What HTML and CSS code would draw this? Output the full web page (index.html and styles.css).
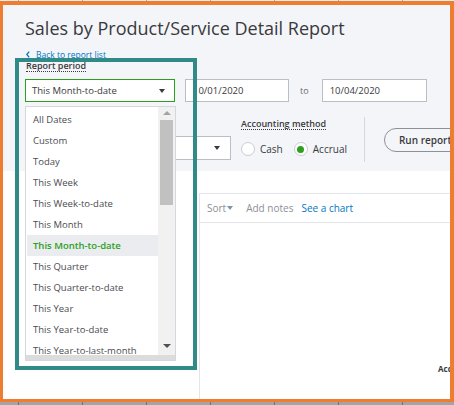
FILE: index.html
```html
<!DOCTYPE html>
<html lang="en">
  <head>
    <meta charset="UTF-8" />
    <meta name="viewport" content="width=device-width, initial-scale=1.0" />
    <title>Sales by Product/Service Detail Report</title>
    <link rel="stylesheet" href="styles.css">
  </head>
  <body>
    <div class="ruler ruler-top"></div>
    <div class="frame">
      <div class="report-head">
        <h1>Sales by Product/Service Detail Report</h1>
        <a class="back" href="#">
          <svg width="4" height="7" viewBox="0 0 4 7"><polyline points="3.2,0.6 0.8,3.5 3.2,6.4" fill="none" stroke="#0077c5" stroke-width="1.3"/></svg>
          Back to report list
        </a>
        <div class="field-label">Report period</div>

        <div class="period-row">
          <div class="select-wrap">
            <div class="select active">This Month-to-date <span class="caret"></span></div>
            <div class="dropdown">
              <div class="dropdown-body">
                <ul class="options">
                  <li>All Dates</li>
                  <li>Custom</li>
                  <li>Today</li>
                  <li>This Week</li>
                  <li>This Week-to-date</li>
                  <li>This Month</li>
                  <li class="current">This Month-to-date</li>
                  <li>This Quarter</li>
                  <li>This Quarter-to-date</li>
                  <li>This Year</li>
                  <li>This Year-to-date</li>
                  <li>This Year-to-last-month</li>
                </ul>
                <div class="scrollbar">
                  <span class="arrow-up"></span>
                  <span class="thumb"></span>
                  <span class="arrow-down"></span>
                </div>
              </div>
              <div class="hbar"></div>
            </div>
          </div>
          <div class="date-input">10/01/2020</div>
          <span class="to">to</span>
          <div class="date-input">10/04/2020</div>
        </div>

        <div class="options-row">
          <div class="select wide"><span class="caret"></span></div>
          <div class="method">
            <div class="field-label">Accounting method</div>
            <div class="radios">
              <label class="radio"><span class="circle"></span>Cash</label>
              <label class="radio on"><span class="circle"><span class="dot"></span></span>Accrual</label>
            </div>
          </div>
          <div class="divider"></div>
          <button class="run">Run report</button>
        </div>
      </div>

      <div class="report-body">
        <div class="card">
          <div class="toolbar">
            <span class="sort">Sort<span class="caret small"></span></span>
            <span class="notes">Add notes</span>
            <span class="chart">See a chart</span>
          </div>
          <div class="sheet"><span class="col-head">Account</span></div>
        </div>
      </div>

      <div class="callout"></div>
    </div>
    <div class="ruler ruler-bottom"></div>
  </body>
</html>
```

FILE: styles.css
```css
* {
  box-sizing: border-box;
  margin: 0;
  padding: 0;
}

body {
  font-family: "Open Sans", "Liberation Sans", sans-serif;
  color: #393a3d;
  background: #fff;
  width: 454px;
  height: 405px;
  overflow: hidden;
}

.ruler-top {
  height: 1px;
  background: repeating-linear-gradient(90deg, #ececec 0 18px, #a9a9a9 18px 19px, #ececec 19px 64px);
}

.ruler-bottom {
  height: 3px;
  background: repeating-linear-gradient(90deg, #a4a4a4 0 18px, #707070 18px 19px, #a4a4a4 19px 64px);
}

.frame {
  position: relative;
  height: 401px;
  border: solid #ed7d31;
  border-width: 4px 4px 3px 3px;
  overflow: hidden;
  background: #fff;
}

/* header area */
.report-head {
  height: 166px;
  background: #f4f5f8;
  padding: 11px 0 0 22px;
}

h1 {
  font-size: 18px;
  font-weight: 400;
  line-height: 24px;
  color: #393a3d;
  white-space: nowrap;
}

.back {
  display: flex;
  align-items: center;
  gap: 6px;
  height: 10px;
  margin-top: 9px;
  padding-left: 1px;
  font-size: 8.5px;
  color: #0077c5;
  text-decoration: none;
}

.field-label {
  width: fit-content;
  font-size: 9px;
  font-weight: 600;
  line-height: 11px;
  border-bottom: 1px dotted #393a3d;
  white-space: nowrap;
}

.report-head > .field-label {
  margin: 1px 0 0 1px;
}

.period-row {
  display: flex;
  align-items: center;
  margin-top: 7px;
}

.period-row > *,
.options-row > * {
  flex-shrink: 0;
}

.select-wrap {
  position: relative;
}

.select {
  display: flex;
  align-items: center;
  justify-content: space-between;
  width: 150px;
  height: 23px;
  padding: 0 9px 0 6px;
  background: #fff;
  border: 1px solid #babec5;
  font-size: 9.5px;
}

.select.active {
  border-color: #2ca01c;
}

.caret {
  width: 0;
  height: 0;
  border-left: 3.5px solid transparent;
  border-right: 3.5px solid transparent;
  border-top: 4px solid #393a3d;
}

.date-input {
  display: flex;
  align-items: center;
  width: 104px;
  height: 23px;
  margin-left: 10px;
  padding-left: 7px;
  background: #fff;
  border: 1px solid #babec5;
  font-size: 9.5px;
}

.to {
  margin: 0 13px 0 11px;
  font-size: 9px;
  color: #6b6c72;
}

.to + .date-input {
  width: 105px;
  margin-left: 0;
}

/* open dropdown */
.dropdown {
  position: absolute;
  top: 27px;
  left: 0;
  z-index: 2;
  display: flex;
  flex-direction: column;
  width: 151px;
  height: 255px;
  background: #fff;
  border: 1px solid #d4d7dc;
}

.dropdown-body {
  display: flex;
  flex: 1;
  min-height: 0;
}

.options {
  flex: 1;
  list-style: none;
  padding: 2px 0 0 1px;
  overflow: hidden;
}

.options li {
  height: 21px;
  line-height: 21px;
  padding-left: 6px;
  font-size: 9.5px;
  color: #4a4b4f;
  white-space: nowrap;
}

.options li.current {
  background: #ebecef;
  color: #2ca01c;
  font-weight: 600;
}

.scrollbar {
  display: flex;
  flex-direction: column;
  align-items: center;
  width: 17px;
  background: #f1f1f1;
}

.arrow-up {
  margin-top: 4px;
  border-left: 4px solid transparent;
  border-right: 4px solid transparent;
  border-bottom: 4px solid #a3a3a3;
}

.thumb {
  width: 13px;
  height: 85px;
  margin-top: 5px;
  background: #c1c1c1;
}

.arrow-down {
  margin-top: auto;
  margin-bottom: 7px;
  border-left: 4px solid transparent;
  border-right: 4px solid transparent;
  border-top: 4px solid #505050;
}

.hbar {
  height: 5px;
  background: #dcdcdc;
}

/* second row */
.options-row {
  display: flex;
  align-items: flex-start;
  margin-top: 15px;
}

.select.wide {
  width: 206px;
  height: 24px;
  margin-top: 19px;
  justify-content: flex-end;
  padding-right: 10px;
}

.method {
  margin: 1px 0 0 10px;
}

.radios {
  display: flex;
  align-items: center;
  margin-top: 12px;
  font-size: 10px;
}

.radio {
  display: flex;
  align-items: center;
  gap: 5px;
}

.radio + .radio {
  margin-left: 11px;
}

.circle {
  display: flex;
  align-items: center;
  justify-content: center;
  width: 14px;
  height: 14px;
  background: #fff;
  border: 1px solid #c9ccd1;
  border-radius: 50%;
}

.dot {
  width: 7px;
  height: 7px;
  background: #2ca01c;
  border-radius: 50%;
}

.divider {
  width: 1px;
  height: 45px;
  margin-left: 17px;
  background: #d4d7dc;
}

.run {
  height: 24px;
  margin: 11px 0 0 19px;
  padding: 0 14px;
  background: transparent;
  border: 1.5px solid #8d9096;
  border-radius: 12px;
  font-family: inherit;
  font-size: 10px;
  font-weight: 600;
  color: #393a3d;
  white-space: nowrap;
}

/* report body */
.report-body {
  height: 228px;
}

.card {
  height: 206px;
  margin: 22px 0 0 196px;
  border-left: 1px solid #e3e5e8;
  border-top: 1px solid #e3e5e8;
}

.toolbar {
  display: flex;
  align-items: center;
  height: 29px;
  padding-left: 7px;
  border-bottom: 1px solid #e3e5e8;
  font-size: 10px;
  color: #8d9096;
  white-space: nowrap;
}

.sort {
  display: flex;
  align-items: center;
  gap: 1px;
  margin-right: 13px;
}

.caret.small {
  border-top-color: #8d9096;
}

.notes {
  margin-right: 8px;
}

.chart {
  color: #0077c5;
}

.sheet {
  padding: 141px 0 0 238px;
  font-size: 8px;
  font-weight: 700;
  line-height: 10px;
  white-space: nowrap;
}

/* annotation box */
.callout {
  position: absolute;
  top: 53px;
  left: 12px;
  z-index: 3;
  width: 182px;
  height: 312px;
  border: 4px solid #2f8a88;
  pointer-events: none;
}
```
